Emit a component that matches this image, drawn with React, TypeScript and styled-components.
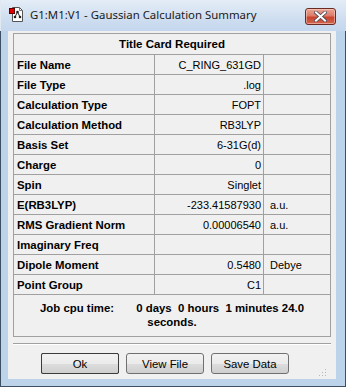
import React from "react";
import styled, { createGlobalStyle, css } from "styled-components";

const Global = createGlobalStyle`
  html, body { margin: 0; padding: 0; background: #ffffff; }
  * { box-sizing: border-box; }
`;

const Window = styled.div`
  width: 346px;
  height: 387px;
  background: #bcd3ea;
  border: 1px solid #3d4f63;
  border-top-color: #9fb3c8;
  display: flex;
  flex-direction: column;
  font-family: "Liberation Sans", Arial, sans-serif;
`;

const TitleBar = styled.div`
  height: 31px;
  flex: none;
  display: flex;
  align-items: center;
  padding: 0 10px 3px 8px;
  background: linear-gradient(#e4edf7, #cfdef0 60%, #c4d7ed);
  margin: -1px -1px 0 -1px;
  border-left: 1px solid #e0e8f1;
`;

const Title = styled.div`
  flex: 1;
  margin-left: 5px;
  font-family: "Noto Sans", "Open Sans", sans-serif;
  font-size: 11.4px;
  color: #1a1a1a;
  white-space: nowrap;
`;

const CloseButton = styled.div`
  width: 31px;
  height: 17px;
  margin-top: 4px;
  border: 1px solid #6b2a22;
  border-radius: 3px;
  background: linear-gradient(#e9a594 0%, #dc7c68 45%, #c8452e 55%, #d2644e 100%);
  box-shadow: inset 0 0 0 1px rgba(255, 220, 210, 0.5);
  display: flex;
  align-items: center;
  justify-content: center;
`;

const Client = styled.div`
  flex: 1;
  margin: 0 9px 7px 7px;
  background: #f0f0f0;
  display: flex;
  flex-direction: column;
  padding: 2px 5px 0 5px;
`;

const Table = styled.div`
  border: 1px solid #a0a0a0;
  display: flex;
  flex-direction: column;
`;

const HeaderRow = styled.div`
  height: 21px;
  border-bottom: 1px solid #a0a0a0;
  display: flex;
  align-items: center;
  justify-content: center;
  font-weight: bold;
  font-size: 11.5px;
  color: #000;
`;

const Row = styled.div`
  height: 20px;
  display: grid;
  grid-template-columns: 141px 109px 1fr;
  border-bottom: 1px solid #a0a0a0;
`;

const Cell = styled.div<{ $kind: "label" | "value" | "unit" }>`
  display: flex;
  align-items: center;
  font-size: 11px;
  color: #000;
  white-space: nowrap;
  overflow: hidden;
  ${(p) =>
    p.$kind === "label" &&
    css`
      font-weight: bold;
      font-size: 11.4px;
      padding-left: 3px;
      border-right: 1px solid #a0a0a0;
    `}
  ${(p) =>
    p.$kind === "value" &&
    css`
      justify-content: flex-end;
      padding-right: 2px;
      border-right: 1px solid #a0a0a0;
    `}
  ${(p) =>
    p.$kind === "unit" &&
    css`
      padding-left: 6px;
    `}
`;

const CpuBox = styled.div`
  height: 41px;
  display: flex;
  flex-direction: column;
  align-items: center;
  justify-content: center;
  font-weight: bold;
  font-size: 11.4px;
  line-height: 14px;
  color: #000;
  padding-bottom: 1px;
`;

const CpuLine = styled.div`
  white-space: pre;
`;

const Separator = styled.div`
  margin-top: 6px;
  height: 2px;
  border-top: 1px solid #a0a0a0;
  border-bottom: 1px solid #ffffff;
`;

const ButtonBar = styled.div`
  display: flex;
  gap: 7px;
  padding: 8px 0 0 28px;
  position: relative;
  flex: 1;
`;

const Button = styled.div<{ $focused?: boolean }>`
  width: 78px;
  height: 21px;
  border: 1px solid #707070;
  border-radius: 3px;
  background: linear-gradient(#f2f2f2 0%, #ebebeb 50%, #dddddd 51%, #cfcfcf 100%);
  display: flex;
  align-items: center;
  justify-content: center;
  font-size: 11.4px;
  color: #000;
  ${(p) =>
    p.$focused &&
    css`
      border: 1px dotted #000;
      outline: 1px solid #3c3c3c;
      outline-offset: -1px;
      border-radius: 2px;
    `}
`;

const Grip = styled.svg`
  position: absolute;
  right: 4px;
  bottom: 2px;
`;

const rows: [string, string, string][] = [
  ["File Name", "C_RING_631GD", ""],
  ["File Type", ".log", ""],
  ["Calculation Type", "FOPT", ""],
  ["Calculation Method", "RB3LYP", ""],
  ["Basis Set", "6-31G(d)", ""],
  ["Charge", "0", ""],
  ["Spin", "Singlet", ""],
  ["E(RB3LYP)", "-233.41587930", "a.u."],
  ["RMS Gradient Norm", "0.00006540", "a.u."],
  ["Imaginary Freq", "", ""],
  ["Dipole Moment", "0.5480", "Debye"],
  ["Point Group", "C1", ""],
];

const AppIcon = () => (
  <svg width="16" height="16" viewBox="0 0 16 16">
    <path d="M3.5 1.5h7l3 3v11h-10z" fill="#fff" stroke="#555" />
    <path d="M10.5 1.5v3h3" fill="none" stroke="#777" />
    <circle cx="8.5" cy="6" r="1.3" fill="#222" />
    <circle cx="6" cy="11" r="1.3" fill="#222" />
    <circle cx="11" cy="11" r="1.3" fill="#222" />
    <path d="M8.5 6L6 11M8.5 6L11 11" stroke="#222" strokeWidth="1" />
    <rect x="0.5" y="2.5" width="5" height="5" fill="#e00000" stroke="#600" />
  </svg>
);

const CloseX = () => (
  <svg width="13" height="11" viewBox="0 0 13 11">
    <path
      d="M2 1.5L6.5 5.5L11 1.5M2 9.5L6.5 5.5L11 9.5"
      fill="none"
      stroke="#4a4a5a"
      strokeWidth="3.6"
      strokeLinecap="square"
    />
    <path
      d="M2 1.5L6.5 5.5L11 1.5M2 9.5L6.5 5.5L11 9.5"
      fill="none"
      stroke="#ffffff"
      strokeWidth="2"
      strokeLinecap="square"
    />
  </svg>
);

export default function App() {
  return (
    <>
      <Global />
      <Window>
        <TitleBar>
          <AppIcon />
          <Title>G1:M1:V1 - Gaussian Calculation Summary</Title>
          <CloseButton>
            <CloseX />
          </CloseButton>
        </TitleBar>
        <Client>
          <Table>
            <HeaderRow>Title Card Required</HeaderRow>
            {rows.map(([label, value, unit]) => (
              <Row key={label}>
                <Cell $kind="label">{label}</Cell>
                <Cell $kind="value">{value}</Cell>
                <Cell $kind="unit">{unit}</Cell>
              </Row>
            ))}
            <CpuBox>
              <CpuLine>{"Job cpu time:       0 days  0 hours  1 minutes 24.0"}</CpuLine>
              <CpuLine>seconds.</CpuLine>
            </CpuBox>
          </Table>
          <Separator />
          <ButtonBar>
            <Button $focused>Ok</Button>
            <Button>View File</Button>
            <Button>Save Data</Button>
            <Grip width="9" height="9" viewBox="0 0 9 9">
              {[
                [7, 1],
                [4, 4],
                [7, 4],
                [1, 7],
                [4, 7],
                [7, 7],
              ].map(([x, y]) => (
                <rect key={`${x}-${y}`} x={x} y={y} width="1" height="1" fill="#b8b8b8" />
              ))}
            </Grip>
          </ButtonBar>
        </Client>
      </Window>
    </>
  );
}
